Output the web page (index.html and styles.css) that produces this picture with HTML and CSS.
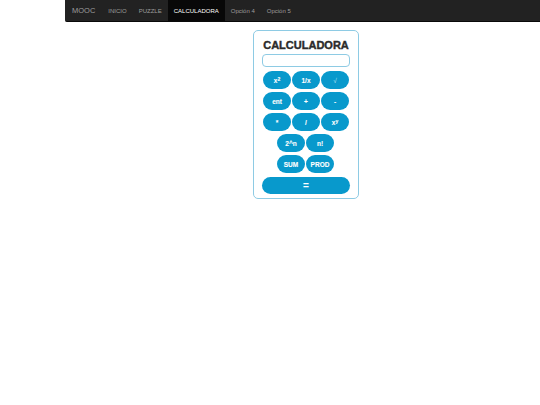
FILE: index.html
```html
<!DOCTYPE html>
<html>
<head>
    <title>Calculadora</title>
    <link rel="stylesheet" href="styles.css">
</head>
<body>
    <nav class="navbar">
        <a class="brand" href="#">MOOC</a>
        <a class="nav-link" href="#">INICIO</a>
        <a class="nav-link" href="#">PUZZLE</a>
        <a class="nav-link active" href="#">CALCULADORA</a>
        <a class="nav-link" href="#">Opción 4</a>
        <a class="nav-link" href="#">Opción 5</a>
    </nav>

    <div class="calculator">
        <h1>CALCULADORA</h1>
        <input type="text" class="display">
        <div class="keys">
            <button>x<sup>2</sup></button>
            <button>1/x</button>
            <button class="root">√</button>
        </div>
        <div class="keys">
            <button>ent</button>
            <button>+</button>
            <button>-</button>
        </div>
        <div class="keys">
            <button>*</button>
            <button>/</button>
            <button>x<sup>y</sup></button>
        </div>
        <div class="keys short">
            <button>2^n</button>
            <button>n!</button>
        </div>
        <div class="keys short">
            <button>SUM</button>
            <button>PROD</button>
        </div>
        <button class="equals">=</button>
    </div>
</body>
</html>
```

FILE: styles.css
```css
* {
    margin: 0;
    padding: 0;
    box-sizing: border-box;
    font-family: "Liberation Sans", Arial, sans-serif;
}

body {
    background: white;
}

.navbar {
    display: flex;
    align-items: stretch;
    height: 22px;
    margin-left: 65px;
    background: #222;
    border-bottom: 1px solid #090909;
    border-bottom-left-radius: 2px;
}

.navbar a {
    display: flex;
    align-items: center;
    text-decoration: none;
    color: #9d9d9d;
}

.brand {
    font-size: 7.5px;
    padding: 0 7px;
}

.nav-link {
    font-size: 6px;
    padding: 0 6px;
}

.navbar .active {
    background: #080808;
    color: white;
}

.calculator {
    display: flex;
    flex-direction: column;
    align-items: center;
    width: 106px;
    height: 169px;
    margin: 8px 0 0 253px;
    padding: 8px;
    border: 1px solid #8ecbe4;
    border-radius: 5px;
}

h1 {
    font-size: 11px;
    line-height: 13px;
    color: #2b2b2b;
    -webkit-text-stroke: 0.4px #2b2b2b;
    margin-bottom: 2px;
}

.display {
    flex: none;
    width: 88px;
    height: 13px;
    margin-bottom: 4px;
    border: 1px solid #8ecbe4;
    border-radius: 4px;
}

.keys {
    display: flex;
    flex: none;
    gap: 1px;
    margin-bottom: 3px;
}

.short {
    margin-right: 1px;
}

button {
    flex: none;
    width: 28px;
    height: 18px;
    border: none;
    border-radius: 9px;
    background: #0899cc;
    color: white;
    font-size: 6.5px;
    font-weight: bold;
    -webkit-text-stroke: 0.1px white;
}

.root {
    font-weight: normal;
    color: #bfe4f2;
    -webkit-text-stroke: 0;
}

sup {
    font-size: 5px;
    line-height: 0;
    vertical-align: 2px;
}

.equals {
    width: 88px;
    height: 17px;
    margin-top: 1px;
    font-size: 10px;
}
```
